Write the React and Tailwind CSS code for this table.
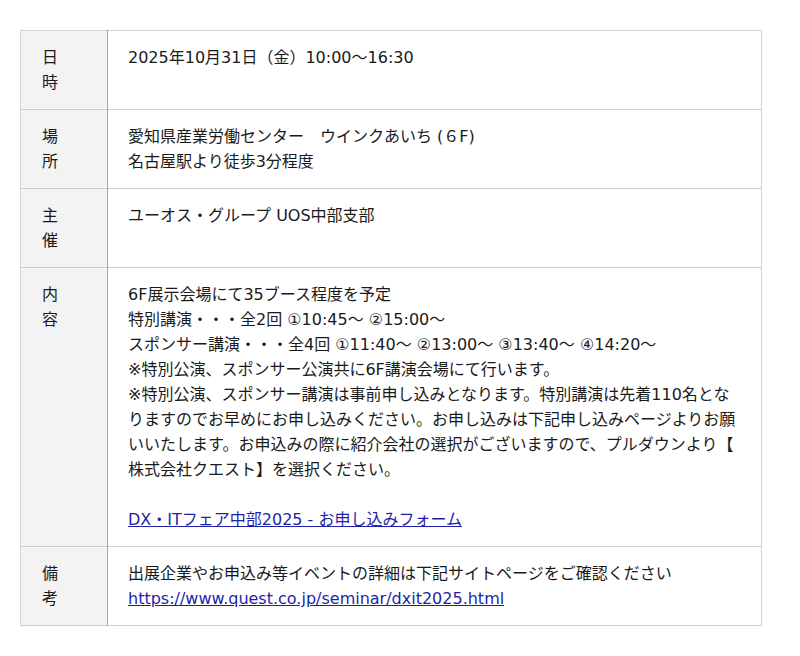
export default function App() {
  const rows = [
    {
      h: ["日", "時"],
      body: <div>2025年10月31日（金）10:00～16:30</div>,
    },
    {
      h: ["場", "所"],
      body: (
        <>
          <div>愛知県産業労働センター　ウインクあいち (６F)</div>
          <div>名古屋駅より徒歩3分程度</div>
        </>
      ),
    },
    {
      h: ["主", "催"],
      body: <div>ユーオス・グループ UOS中部支部</div>,
    },
    {
      h: ["内", "容"],
      body: (
        <>
          <div>6F展示会場にて35ブース程度を予定</div>
          <div>特別講演・・・全2回 ①10:45～ ②15:00～</div>
          <div>スポンサー講演・・・全4回 ①11:40～ ②13:00～ ③13:40～ ④14:20～</div>
          <div>※特別公演、スポンサー公演共に6F講演会場にて行います。</div>
          <div className="[line-break:anywhere]">
            ※特別公演、スポンサー講演は事前申し込みとなります。特別講演は先着110名となりますのでお早めにお申し込みください。お申し込みは下記申し込みページよりお願いいたします。お申込みの際に紹介会社の選択がございますので、プルダウンより【株式会社クエスト】を選択ください。
          </div>
          <div>&nbsp;</div>
          <div>
            <a href="#" className="text-[#1f1fa8] underline">DX・ITフェア中部2025 - お申し込みフォーム</a>
          </div>
        </>
      ),
    },
    {
      h: ["備", "考"],
      body: (
        <>
          <div>出展企業やお申込み等イベントの詳細は下記サイトページをご確認ください</div>
          <div>
            <a href="#" className="text-[#1f1fa8] underline">https://www.quest.co.jp/seminar/dxit2025.html</a>
          </div>
        </>
      ),
    },
  ];
  return (
    <div className="bg-white w-[800px] h-[656px] pt-[30px] px-[20px] [font-family:'DejaVu_Sans','Noto_Sans_CJK_JP',sans-serif] text-[16px] leading-[25px] text-[#1a1a1a]">
      <table className="w-[742px] border-collapse border border-[#d4d4d4]">
        <tbody>
          {rows.map((r, i) => (
            <tr key={i} className="border-b border-[#cccccc]">
              <th className="w-[87px] bg-[#f3f3f3] border-r border-[#a8a8a8] align-top text-left font-normal pl-[21px] pt-[14px] pb-[14px]">
                <div>{r.h[0]}</div>
                <div>{r.h[1]}</div>
              </th>
              <td className="align-top pl-[20px] pr-[20px] pt-[14px] pb-[14px]">{r.body}</td>
            </tr>
          ))}
        </tbody>
      </table>
    </div>
  );
}
